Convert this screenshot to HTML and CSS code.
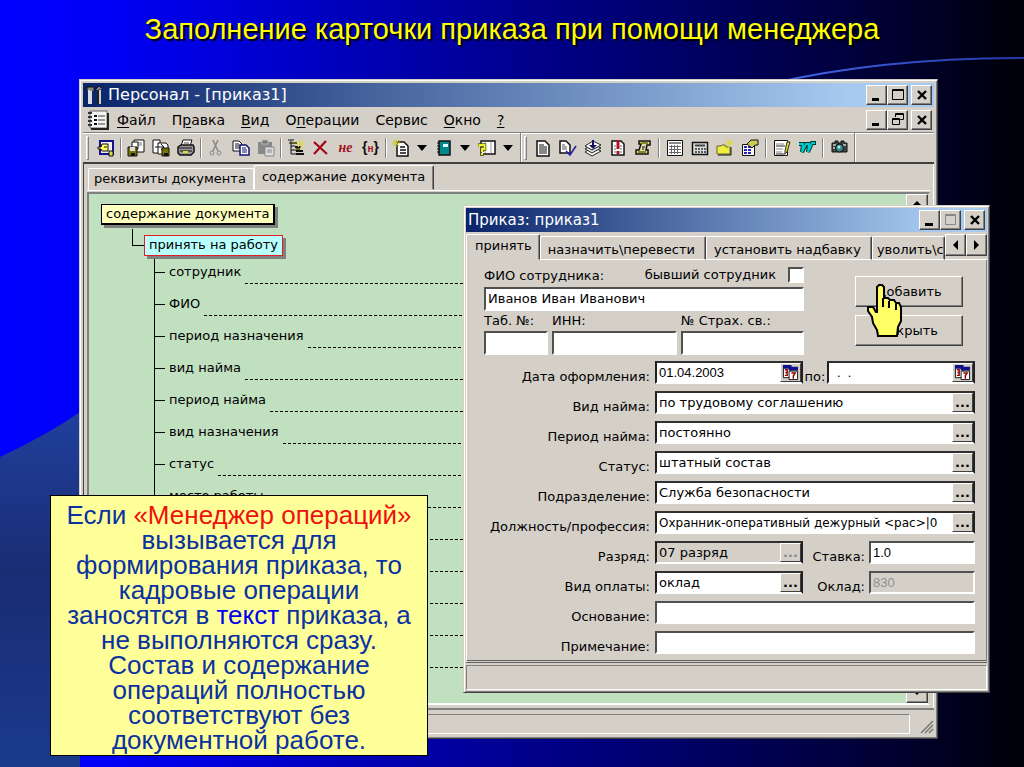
FILE: index.html
```html
<!DOCTYPE html>
<html lang="ru">
<head>
<meta charset="utf-8">
<title>Заполнение карточки приказа</title>
<link rel="stylesheet" href="styles.css">
</head>
<body>
<main class="slide">
  <svg class="backdrop" viewBox="0 0 1024 767" preserveAspectRatio="none" aria-hidden="true">
    <defs>
      <linearGradient id="night" x1="0" x2="1" y1="0" y2="0">
        <stop offset="0" stop-color="#0000ff"/><stop offset=".1" stop-color="#0000f8"/>
        <stop offset=".5" stop-color="#000090"/><stop offset=".86" stop-color="#000034"/><stop offset="1" stop-color="#000008"/>
      </linearGradient>
      <linearGradient id="hill" x1="0" x2="0" y1="0" y2="1">
        <stop offset="0" stop-color="#20409c"/><stop offset=".45" stop-color="#1a2c74"/><stop offset="1" stop-color="#1a3a8c"/>
      </linearGradient>
      <linearGradient id="arc" x1="0" x2="1"><stop offset="0" stop-color="#4468e8"/><stop offset="1" stop-color="#2438a8"/></linearGradient>
    </defs>
    <rect width="1024" height="767" fill="url(#night)"/>
    <path d="M0 457Q45 436 80 412V767H0Z" fill="url(#hill)"/>
    <path d="M770 84Q880 58 1024 58" fill="none" stroke="url(#arc)" stroke-width="2"/>
  </svg>

  <h1 class="headline">Заполнение карточки приказа при помощи менеджера</h1>

  <section class="window main-window">
    <header class="titlebar">
      <svg class="app-icon" viewBox="0 0 18 20"><path d="M1 6V2h7v4M9 5l4-4 4 3" fill="#888" stroke="#111"/><path d="M3 5v14M5 6v13" stroke="#ddd" stroke-width="2"/><path d="M12 5v14" stroke="#222" stroke-width="2"/><path d="M14 5v14" stroke="#ccc" stroke-width="2"/></svg>
      <h2>Персонал - [приказ1]</h2>
      <div class="controls">
        <button aria-label="Свернуть"><svg viewBox="0 0 16 16"><path d="M3 12.500h7" stroke="#000" stroke-width="3"/></svg></button><button aria-label="Развернуть"><svg viewBox="0 0 16 16"><path d="M2.500 2.500h11v10h-11zM2 3.500h12" fill="none" stroke="#000"/></svg></button><button class="close" aria-label="Закрыть"><svg viewBox="0 0 16 16"><path d="M4 4l8 8M12 4l-8 8" stroke="#000" stroke-width="2.400"/></svg></button>
      </div>
    </header>
    <nav class="menubar">
      <svg class="menu-icon" viewBox="0 0 22 20"><path d="M3 1h17v17H3z" fill="#f4f4f4" stroke="#666"/><path d="M4 19h17V3" fill="none" stroke="#222" stroke-width="2"/><path d="M1 3h4M1 7h4M1 11h4M1 15h4" stroke="#333" stroke-width="2"/><path d="M7 6h3M7 10h3M7 14h3" stroke="#111" stroke-width="2"/><path d="M11 6h7M11 10h7M11 14h7" stroke="#999" stroke-width="2"/></svg>
      <ul>
        <li><button><u>Ф</u>айл</button></li><li><button>П<u>р</u>авка</button></li><li><button><u>В</u>ид</button></li><li><button>О<u>п</u>ерации</button></li><li><button>Сервис</button></li><li><button><u>О</u>кно</button></li><li><button><u>?</u></button></li>
      </ul>
      <div class="controls">
        <button aria-label="Свернуть документ"><svg viewBox="0 0 16 16"><path d="M3 12.500h7" stroke="#000" stroke-width="3"/></svg></button><button aria-label="Восстановить документ"><svg viewBox="0 0 16 16"><path d="M5.500 5V1.500h8v6H10M5 2.500h9" fill="none" stroke="#000"/><path d="M2.500 6.500h7v6h-7zM2 7.500h8" fill="none" stroke="#000"/></svg></button><button class="close" aria-label="Закрыть документ"><svg viewBox="0 0 16 16"><path d="M4 4l8 8M12 4l-8 8" stroke="#000" stroke-width="2.400"/></svg></button>
      </div>
    </nav>
    <div class="toolbars">
      <div class="toolbar">
        <i class="grip"></i>
        <button aria-label="Выход"><svg viewBox="0 0 18 18"><path d="M3 2h13v13H3z" fill="#eee" stroke="#118" stroke-width="2"/><path d="M1 8h3l1-3h6v7H5L4 10H1z" fill="#ff6" stroke="#111"/><path d="M7 8h3" stroke="#111"/><path d="M12 12h4v5h-4z" fill="#dd4" stroke="#111"/></svg></button>
        <i class="sep"></i>
        <button aria-label="Сохранить"><svg viewBox="0 0 18 18"><path d="M7 1h10v12H7z" fill="#fff" stroke="#111"/><path d="M9 3h6v4H9z" fill="#bbb"/><path d="M5 3h6v7H5z" fill="#fff" stroke="#111"/><path d="M1 8h9v9H1z" fill="#770" stroke="#111"/><path d="M3 8h5v4H3z" fill="#ddd"/><path d="M4 14h4v3H4z" fill="#111"/></svg></button>
        <button aria-label="Открыть"><svg viewBox="0 0 18 18"><path d="M1 1h7v13H1z" fill="#fff" stroke="#111"/><path d="M6 4h8l2 2v9H6z" fill="#fff" stroke="#111"/><path d="M3 8h8M9 5l3 3-3 3" fill="none" stroke="#111"/><path d="M10 9h7v8h-7z" fill="#770" stroke="#111"/><path d="M12 14h4v3h-4z" fill="#111"/></svg></button>
        <button aria-label="Печать"><svg viewBox="0 0 18 18"><path d="M6 1h9l-2 6H4z" fill="#fff" stroke="#111"/><path d="M7 4h5" stroke="#444"/><path d="M1 8l3-2h12l1 2v5l-3 3H3l-2-2z" fill="#999" stroke="#111" stroke-width="1.500"/><path d="M2 9h13M3 12h12" stroke="#111"/><path d="M6 13h5" stroke="#dd3" stroke-width="2"/></svg></button>
        <i class="sep"></i>
        <button aria-label="Вырезать" disabled><svg viewBox="0 0 18 18" fill="none" stroke="#888"><path d="M6 1l5 11M11 1L6 12" stroke-width="1.500"/><circle cx="5" cy="14" r="2"/><circle cx="12" cy="14" r="2"/></svg></button>
        <button aria-label="Копировать"><svg viewBox="0 0 18 18" fill="#fff"><path d="M1 2h6l3 3v7H1z" stroke="#111"/><path d="M3 5h4M3 7h5M3 9h5" stroke="#111"/><path d="M8 6h6l3 3v7H8z" stroke="#117" stroke-width="1.500"/><path d="M10 9h4M10 11h5M10 13h5" stroke="#117"/></svg></button>
        <button aria-label="Вставить" disabled><svg viewBox="0 0 18 18"><path d="M1 3h14v12H1z" fill="#888"/><path d="M5 1h6v4H5z" fill="#777" stroke="#bbb"/><path d="M8 8h9v9H8z" fill="#ddd" stroke="#888"/><path d="M10 11h5M10 13h5" stroke="#888"/></svg></button>
        <i class="sep"></i>
        <button aria-label="Структура"><svg viewBox="0 0 18 18" fill="none" stroke="#111"><path d="M1 1h6M2 4h6M4 2v13M4 7h4M4 11h5M4 15h5"/><path d="M8 8h6M9 12h7M9 15h8" stroke-width="2"/><path d="M5 4h5M9 10h4" stroke="#661" stroke-width="2"/><path d="M14 1v9M10 5h8M11 2l6 6M17 2l-6 6" stroke="#dd4"/></svg></button>
        <button aria-label="Удалить"><svg viewBox="0 0 18 18"><path d="M2 3l13 12M14 2L2 15" stroke="#a00818" stroke-width="2.200"/></svg></button>
        <button class="glyph"><em>не</em></button>
        <button class="glyph"><b>{<span>н</span>}</b></button>
        <i class="sep"></i>
        <button aria-label="Новый документ"><svg viewBox="0 0 18 18"><path d="M5 3h7l4 4v10H5z" fill="#fff" stroke="#111" stroke-width="1.500"/><path d="M8 8h5M8 11h6M8 14h6" stroke="#111" stroke-width="1.500"/><path d="M4 0v8M0 4h8M1 1l6 6M7 1L1 7" stroke="#cc2"/></svg></button>
        <button class="drop" aria-label="Список новых документов"><svg viewBox="0 0 10 6"><path d="M0 0h10L5 6z"/></svg></button>
        <button aria-label="Справочник"><svg viewBox="0 0 18 18"><path d="M4 2h11v14H4z" fill="#088" stroke="#111" stroke-width="1.500"/><path d="M8 5h5v3H8z" fill="#dff"/><path d="M2 4h3M2 7h3M2 10h3M2 13h3" stroke="#111"/></svg></button>
        <button class="drop" aria-label="Список справочников"><svg viewBox="0 0 10 6"><path d="M0 0h10L5 6z"/></svg></button>
        <button aria-label="Запрос"><svg viewBox="0 0 18 18"><path d="M3 2h14v13H3z" fill="#fff" stroke="#111" stroke-width="1.500"/><path d="M7 3v11M13 3v11" stroke="#999"/><path d="M1.500 8V6h5v4H4v3M4 14v3" fill="none" stroke="#551" stroke-width="3.500"/><path d="M1.500 8V6h5v4H4v3M4 14v2" fill="none" stroke="#ee3" stroke-width="2"/></svg></button>
        <button class="drop" aria-label="Список запросов"><svg viewBox="0 0 10 6"><path d="M0 0h10L5 6z"/></svg></button>
      </div>
      <div class="toolbar bar-docs">
        <i class="grip"></i>
        <button aria-label="Текст"><svg viewBox="0 0 18 18"><path d="M3 2h8l4 4v11H3z" fill="#fff" stroke="#111" stroke-width="1.500"/><path d="M5 6h5M5 8h8M5 10h8M5 12h8M5 14h8" stroke="#111"/></svg></button>
        <button aria-label="Проверить"><svg viewBox="0 0 18 18"><path d="M1 2h6l4 4v8H1z" fill="#fff" stroke="#111" stroke-width="1.500"/><path d="M3 6h3M3 8h5M3 10h5" stroke="#555"/><path d="M7 12l4 4 6-9" fill="none" stroke="#22a" stroke-width="1.600"/></svg></button>
        <button aria-label="Провести"><svg viewBox="0 0 18 18" stroke="#222"><path d="M1 13l7 4 9-5-8-4z" fill="#fff"/><path d="M1 10l7 4 9-5-8-4z" fill="#ddd"/><path d="M1 7l7 4 9-5-8-4z" fill="#fff"/><path d="M8 1v5H5l4 4 4-4h-3V1z" fill="#116" stroke="none"/></svg></button>
        <button aria-label="Важное"><svg viewBox="0 0 18 18"><path d="M3 2h9l3 3v11H3z" fill="#fff" stroke="#111" stroke-width="1.500"/><path d="M5 7h2M5 10h2M5 13h2M11 7h2M11 10h2M11 13h2" stroke="#666"/><path d="M9 1v9M9 12v3" stroke="#b01020" stroke-width="3"/></svg></button>
        <button aria-label="Свиток"><svg viewBox="0 0 18 18"><path d="M5 2h11v4h-3l-1 5h2v4H2v-4h3l2-6H5z" fill="#dda" stroke="#111" stroke-width="1.500"/><path d="M7 4h7M4 13h8" stroke="#882" stroke-width="2"/><path d="M8 8h3M8 10h2" stroke="#111"/></svg></button>
        <i class="sep"></i>
        <button aria-label="Таблица"><svg viewBox="0 0 18 18"><path d="M1.500 1.500h15v15h-15z" fill="#fff" stroke="#111"/><path d="M3 4h12" stroke="#888" stroke-width="2"/><path d="M3 7.500h12M3 10.500h12M3 13.500h12M5.500 6v9M8.500 6v9M11.500 6v9" stroke="#666"/></svg></button>
        <button aria-label="Калькулятор"><svg viewBox="0 0 18 18"><path d="M1.500 3.500h15v12h-15z" fill="#ddd" stroke="#111" stroke-width="1.500"/><path d="M4 6.500h10" stroke="#444" stroke-width="2"/><path d="M4 10h11M4 13h11" stroke="#333" stroke-width="1.500" stroke-dasharray="2 1"/></svg></button>
        <button aria-label="Новая папка"><svg viewBox="0 0 18 18"><path d="M1 7h4l1-1h3l1 2h4v7H1z" fill="#ee4" stroke="#662"/><path d="M2 16h13V8" fill="none" stroke="#111"/><path d="M13 0v9M9 4h9M10 1l6 6M16 1l-6 6" stroke="#dd3"/></svg></button>
        <button aria-label="Свойства"><svg viewBox="0 0 18 18"><path d="M1.500 5.500h12v11h-12z" fill="#fff" stroke="#111"/><path d="M3 8h8M3 11h8M3 14h8" stroke="#22b" stroke-width="2" stroke-dasharray="3 1"/><path d="M6 5l4-4h7v5h-3l-3 3z" fill="#cc5" stroke="#111"/></svg></button>
        <i class="sep"></i>
        <button aria-label="Правка записи"><svg viewBox="0 0 18 18"><path d="M1.500 1.500h13v15h-13z" fill="#fff" stroke="#111"/><path d="M3 5h8M3 10h7M3 13h6" stroke="#888"/><path d="M3 7h9M3 15h9" stroke="#222"/><path d="M12 12l2-9h3l-3 10-2 2z" fill="#dd3" stroke="#331"/></svg></button>
        <button aria-label="Экспорт"><svg viewBox="0 0 18 18"><path d="M1 5h4l-1 8 4-8h3l-1 8 4-9h4" fill="none" stroke="#033" stroke-width="4"/><path d="M1 5h4l-1 8 4-8h3l-1 8 4-9h3" fill="none" stroke="#0cc" stroke-width="2"/></svg></button>
        <i class="sep"></i>
        <button aria-label="Снимок"><svg viewBox="0 0 18 18"><path d="M2 4h3V2h3v2h3V2h3v2h3v9H2z" fill="#444" stroke="#111"/><path d="M3 6h3M13 6h3M3 9h2" stroke="#ccc" stroke-width="1.500"/><circle cx="9.500" cy="9" r="4" fill="#388" stroke="#111"/><circle cx="9" cy="8" r="1.500" fill="#aee"/></svg></button>
      </div>
    </div>
    <div class="document">
      <div class="tabs doc-tabs" role="tablist">
        <button role="tab" aria-selected="false">реквизиты документа</button><button role="tab" aria-selected="true">содержание документа</button>
      </div>
      <div class="canvas">
        <div class="tree">
          <div class="node root">содержание документа</div>
          <div class="branch"><div class="node action">принять на работу</div></div>
          <ul class="leaves">
            <li><span>сотрудник</span></li><li><span>ФИО</span></li><li><span>период назначения</span></li><li><span>вид найма</span></li><li><span>период найма</span></li><li><span>вид назначения</span></li><li><span>статус</span></li><li><span>место работы</span></li><li></li><li></li><li></li><li></li><li></li>
          </ul>
        </div>
        <div class="scrollbar">
          <button aria-label="Вверх"><svg viewBox="0 0 10 6"><path d="M0 5h10L5 0z"/></svg></button>
          <button aria-label="Вниз"><svg viewBox="0 0 10 6"><path d="M0 0h10L5 5z"/></svg></button>
        </div>
      </div>
    </div>
    <footer class="statusbar"><div></div><svg viewBox="0 0 14 14"><path d="M1 13L13 1M5 13l8-8M9 13l4-4" stroke="#777" stroke-width="1.500"/></svg></footer>
  </section>

  <section class="window dialog">
    <header class="titlebar">
      <h2>Приказ: приказ1</h2>
      <div class="controls">
        <button aria-label="Свернуть окно"><svg viewBox="0 0 16 16"><path d="M3 12.500h8" stroke="#000" stroke-width="3"/></svg></button><button aria-label="Развернуть окно" disabled><svg viewBox="0 0 16 16"><path d="M2.500 2.500h10v10h-10zM2 3.500h11" fill="none" stroke="#888"/></svg></button><button class="close" aria-label="Закрыть окно"><svg viewBox="0 0 16 16"><path d="M4 4l8 8M12 4l-8 8" stroke="#000" stroke-width="2.400"/></svg></button>
      </div>
    </header>
    <div class="tab-row">
      <div class="tabs dialog-tabs" role="tablist">
        <button role="tab" aria-selected="true">принять</button><button role="tab" aria-selected="false">назначить\перевести</button><button role="tab" aria-selected="false">установить надбавку</button><button role="tab" aria-selected="false">уволить\с</button>
      </div>
      <div class="tab-scroll">
        <button aria-label="Назад"><svg viewBox="0 0 6 10"><path d="M5 0v10L0 5z"/></svg></button><button aria-label="Вперёд"><svg viewBox="0 0 6 10"><path d="M0 0v10l5-5z"/></svg></button>
      </div>
    </div>
    <form class="panel">
      <div class="person">
        <div class="person-data">
          <div class="caption"><label for="fio">ФИО сотрудника:</label><label class="former">бывший сотрудник <input type="checkbox"></label></div>
          <div class="field"><input id="fio" value="Иванов Иван Иванович"></div>
          <div class="codes">
            <div><label for="tab">Таб. №:</label><div class="field"><input id="tab"></div></div>
            <div><label for="inn">ИНН:</label><div class="field"><input id="inn"></div></div>
            <div><label for="ins">№ Страх. св.:</label><div class="field"><input id="ins"></div></div>
          </div>
        </div>
        <div class="actions">
          <button type="button">Добавить</button>
          <button type="button">Закрыть</button>
          <svg class="hand" viewBox="0 0 36 55" aria-hidden="true"><path d="M10 3l2-2h3l2 2v11h4l2 2h4l2 3h3l2 4v14l-3 6-1 9H11l-1-6-4-7-1-6-4-6v-4h5l3 5h1z" fill="#ffff66" stroke="#000" stroke-width="2"/><path d="M16 14v9M22 17v7M29 20v6" stroke="#000" stroke-width="2"/></svg>
        </div>
      </div>
      <div class="rows">
        <label for="date">Дата оформления:</label>
        <div class="split">
          <div class="field boxed half"><input id="date" class="num" value="01.04.2003"><button type="button" aria-label="Календарь"><svg viewBox="0 0 18 18"><path d="M1.500 2.500h8v12h-8z" fill="#fff" stroke="#111"/><path d="M1 1h9v4H1zM7 3h10v4H7z" fill="#118"/><path d="M7.500 7.500h9v9h-9z" fill="#fff" stroke="#111"/><path d="M3 6h2.500v3H3.500h2v3H3M10 9.500h4l-2 3v3" fill="none" stroke="#900" stroke-width="1.500"/></svg></button></div>
          <label class="to" for="date2">по:</label>
          <div class="field boxed"><input id="date2" class="num blank" value=".  ."><button type="button" aria-label="Календарь окончания"><svg viewBox="0 0 18 18"><path d="M1.500 2.500h8v12h-8z" fill="#fff" stroke="#111"/><path d="M1 1h9v4H1zM7 3h10v4H7z" fill="#118"/><path d="M7.500 7.500h9v9h-9z" fill="#fff" stroke="#111"/><path d="M3 6h2.500v3H3.500h2v3H3M10 9.500h4l-2 3v3" fill="none" stroke="#900" stroke-width="1.500"/></svg></button></div>
        </div>
        <label for="hire">Вид найма:</label>
        <div class="field boxed"><input id="hire" value="по трудовому соглашению"><button type="button">...</button></div>
        <label for="period">Период найма:</label>
        <div class="field boxed"><input id="period" value="постоянно"><button type="button">...</button></div>
        <label for="status">Статус:</label>
        <div class="field boxed"><input id="status" value="штатный состав"><button type="button">...</button></div>
        <label for="unit">Подразделение:</label>
        <div class="field boxed"><input id="unit" value="Служба безопасности"><button type="button">...</button></div>
        <label for="post">Должность/профессия:</label>
        <div class="field boxed"><input id="post" class="long" value="Охранник-оперативный дежурный &lt;рас&gt;|0"><button type="button">...</button></div>
        <label for="grade">Разряд:</label>
        <div class="split">
          <div class="field boxed half gray"><input id="grade" value="07 разряд"><button type="button" disabled>...</button></div>
          <label class="side" for="rate">Ставка:</label>
          <div class="field"><input id="rate" class="num" value="1.0"></div>
        </div>
        <label for="pay">Вид оплаты:</label>
        <div class="split">
          <div class="field boxed half"><input id="pay" value="оклад"><button type="button">...</button></div>
          <label class="side" for="salary">Оклад:</label>
          <div class="field gray"><input id="salary" class="num" value="830" disabled></div>
        </div>
        <label for="basis">Основание:</label>
        <div class="field"><input id="basis"></div>
        <label for="note">Примечание:</label>
        <div class="field"><input id="note"></div>
      </div>
    </form>
    <footer class="dialog-status"></footer>
  </section>

  <aside class="callout">Если <span class="red">«Менеджер операций»</span> вызывается для формирования приказа, то кадровые операции заносятся в <span class="blue">текст</span> приказа, а не выполняются сразу. Состав и содержание операций полностью соответствуют без документной работе.</aside>
</main>
</body>
</html>
```

FILE: styles.css
```css
* { box-sizing: border-box; }

body {
  margin: 0;
  background: #00003c;
  color: #000;
  font: 13px/16px "DejaVu Sans", sans-serif;
}

button, input { font: inherit; color: inherit; margin: 0; padding: 0; border-radius: 0; }
button { border: 0; background: none; }
h1, h2, ul { margin: 0; padding: 0; font-weight: normal; list-style: none; }
svg { display: block; }

.slide { position: relative; min-height: 100vh; overflow: hidden; }
.backdrop { position: absolute; inset: 0; width: 100%; height: 100%; }

.headline {
  position: relative;
  padding-top: 12px;
  text-align: center;
  color: #ff0;
  font: 29px/34px "Liberation Sans", Arial, sans-serif;
  text-shadow: 2px 2px 1px #000;
}

/* windows */
.window {
  position: absolute;
  background: #d4d0c8;
  border: 1px solid;
  border-color: #d4d0c8 #404040 #404040 #d4d0c8;
  box-shadow: inset 1px 1px #fff, inset -1px -1px #808080;
}
.main-window { top: 79px; left: 79px; right: 86px; padding: 3px; }
.dialog { top: 205px; left: 463px; right: 34px; padding: 2px; }

.titlebar {
  display: flex;
  align-items: center;
  height: 24px;
  padding: 0 2px 0 3px;
  background: linear-gradient(90deg, #0a246a, #a6caf0 90%);
  color: #fff;
}
.titlebar h2 { flex: 1; font-size: 16px; line-height: 20px; }
.app-icon { width: 18px; height: 20px; margin-right: 4px; }
.dialog .titlebar { padding-left: 2px; }
.dialog h2 { font-size: 15px; }

.controls { display: flex; }
.controls button, .scrollbar button, .tab-scroll button {
  display: grid;
  place-items: center;
  width: 21px;
  height: 20px;
  background: #d4d0c8;
  border: 1px solid;
  border-color: #fff #404040 #404040 #fff;
  box-shadow: inset -1px -1px #808080;
}
.controls svg { width: 16px; height: 16px; }
.controls .close { margin-left: 3px; }

.menubar { display: flex; align-items: center; height: 25px; padding: 0 2px 0 4px; }
.menu-icon { width: 22px; height: 20px; }
.menubar ul { display: flex; flex: 1; gap: 16px; padding-left: 8px; font-size: 14px; }
.menubar u { text-underline-offset: 2px; }

/* toolbars */
.toolbars {
  display: flex;
  height: 32px;
  border-top: 1px solid #808080;
  border-bottom: 2px solid #404040;
  box-shadow: inset 0 1px #fff;
}
.toolbar { display: flex; align-items: center; padding: 1px 3px 0; border-right: 1px solid #808080; box-shadow: 1px 0 #fff; }
.toolbar button { display: grid; place-items: center; width: 25px; height: 24px; }
.toolbar button svg { width: 18px; height: 18px; }
.toolbar .drop { width: 18px; }
.toolbar .drop svg { width: 10px; height: 6px; }
.grip { width: 3px; height: 24px; margin-right: 4px; border: 1px solid; border-color: #fff #808080 #808080 #fff; }
.sep { width: 2px; height: 20px; margin: 0 1px 0 2px; border-left: 1px solid #808080; border-right: 1px solid #fff; }
.bar-docs .sep { margin: 0 2px 0 3px; }
.bar-docs .grip { margin-right: 3px; }
.glyph { font-family: "Liberation Serif", serif; font-size: 15px; color: #a01020; }
.glyph em { font-weight: bold; font-size: 14px; }
.glyph b { font-family: "Liberation Sans", sans-serif; color: #111; font-size: 14px; }
.glyph b span { color: #a01020; font-size: 10px; }

/* document area */
.document { padding: 1px 3px 3px; border-left: 1px solid #404040; border-right: 1px solid #fff; }
.tabs { display: flex; align-items: flex-end; }
.tabs button {
  white-space: nowrap;
  border: 1px solid;
  border-color: #fff #404040 transparent #fff;
  border-radius: 2px 2px 0 0;
  box-shadow: inset -1px 0 #808080;
}
.doc-tabs { height: 26px; padding-left: 1px; border-bottom: 1px solid #fff; }
.doc-tabs button { height: 22px; padding: 0 7px 0 5px; }
.doc-tabs [aria-selected="false"] { border-right-color: #fff; box-shadow: none; }
.doc-tabs [aria-selected="true"] { height: 25px; padding: 0 8px 2px 7px; }

.canvas {
  display: flex;
  margin-top: 1px;
  border: 2px solid;
  border-color: #808080 #d4d0c8 #fff #808080;
  background: #c0e0c0;
}
.tree { flex: 1; padding: 10px 0 31px 12px; }
.node { width: max-content; height: 21px; padding: 1px 4px; border: 1px solid #000; box-shadow: 3px 3px #808080; }
.root { background: #ffffc0; border-width: 1px 2px 2px 1px; }
.branch { display: flex; margin: 4px 0 0 31px; padding-top: 6px; }
.branch::before { content: ""; width: 11px; height: 16px; margin-top: -6px; border: solid #000; border-width: 0 0 1px 1px; }
.action { background: #b8ffff; border-color: #e02020; }
.leaves { margin-left: 53px; border-left: 1px solid #000; }
.leaves li { display: flex; height: 32px; }
.leaves li::before { content: ""; width: 10px; height: 1px; margin-top: 16px; background: #000; }
.leaves span { padding: 8px 4px 0; }
.leaves li::after {
  content: "";
  flex: 1;
  height: 1px;
  margin-top: 27px;
  background: repeating-linear-gradient(90deg, #000 0 3px, transparent 3px 5px);
}
.scrollbar { display: flex; flex-direction: column; justify-content: space-between; width: 22px; background: #e8e6e2; }
.scrollbar button { width: 22px; }
.scrollbar svg { width: 10px; height: 6px; }

.statusbar {
  display: flex;
  align-items: flex-end;
  gap: 10px;
  padding: 4px 0 1px;
  border-top: 2px solid #808080;
}
.statusbar div { flex: 1; height: 20px; border: 1px solid; border-color: #808080 #fff #fff #808080; }
.statusbar svg { width: 14px; height: 14px; }

/* order dialog */
.tab-row { display: flex; height: 28px; padding-top: 2px; box-shadow: inset 0 -1px #fff; }
.dialog-tabs { flex: 1; min-width: 0; overflow: hidden; }
.dialog-tabs button { flex: none; height: 24px; padding: 3px 10px 0 7px; }
.dialog-tabs [aria-selected="true"] { height: 26px; padding: 0 7px 2px 8px; background: #d4d0c8; }
.dialog-tabs [aria-selected="false"]:last-child { padding: 3px 0 0 4px; }
.tab-scroll { display: flex; }
.tab-scroll button { height: 22px; }
.tab-scroll svg { width: 6px; height: 10px; }

.panel {
  padding: 7px 11px 6px 17px;
  border-left: 1px solid #fff;
  border-right: 1px solid #808080;
  border-bottom: 3px double #606060;
}
.person { display: flex; justify-content: space-between; }
.person-data { width: 320px; }
.caption { display: flex; justify-content: space-between; height: 20px; }
.caption > label { padding-top: 1px; }
.caption .former { display: flex; align-items: center; gap: 12px; height: 16px; padding: 0; }
.former input {
  appearance: none;
  width: 16px;
  height: 16px;
  background: #fff;
  border: 2px solid;
  border-color: #505050 #fff #fff #505050;
}
.codes { display: grid; grid-template-columns: 64px 125px minmax(0, 1fr); column-gap: 4px; padding-top: 2px; }
.codes label { display: block; height: 18px; white-space: nowrap; }

.field { display: flex; height: 23px; background: #fff; border: 2px solid; border-color: #505050 #fff #fff #505050; flex: 1; min-width: 0; }
.person-data .field { height: 24px; }
.field input { flex: 1; width: 100%; min-width: 0; padding-left: 2px; border: 0; background: none; outline: 0; }
.field .num { font-family: "Liberation Sans", Arial, sans-serif; }
.field .long { font-size: 12px; }
.field .blank { padding-left: 8px; }
.boxed { border-color: #303030 #202020 #fff #202020; }
.field button {
  display: grid;
  flex: none;
  place-items: center;
  width: 21px;
  background: #d4d0c8;
  border: 1px solid;
  border-color: #fff #404040 #404040 #fff;
  font-weight: bold;
  line-height: 14px;
}
.field button svg { width: 17px; height: 17px; }
.field button:disabled { color: #888; }
.half { flex: none; width: 148px; }
.gray { background: #d4d0c8; }
.gray input:disabled { color: #909090; }

.actions { position: relative; display: flex; flex-direction: column; gap: 8px; margin: 9px 12px 0 0; }
.actions button {
  width: 108px;
  height: 31px;
  border: 1px solid;
  border-color: #fff #404040 #404040 #fff;
  box-shadow: inset -1px -1px #808080;
}
.hand { position: absolute; left: 12px; top: 8px; width: 36px; height: 55px; }

.rows { display: grid; grid-template-columns: 166px minmax(0, 1fr); column-gap: 5px; row-gap: 7px; padding-top: 6px; }
.rows label { padding-top: 8px; height: 23px; text-align: right; white-space: nowrap; }
.split { display: flex; min-width: 0; }
.split .to { flex: none; width: 24px; text-align: center; }
.split .side { flex: none; width: 66px; padding-right: 4px; }
.dialog-status { height: 25px; margin-top: 2px; border: 1px solid; border-color: #808080 #fff #fff #808080; }

.callout {
  position: absolute;
  left: 50px;
  bottom: 11px;
  width: 378px;
  padding: 7px 12px 2px;
  background: #ffff99;
  border: 1px solid #000;
  color: #0a32a0;
  font: 26px/25px "Liberation Sans", Arial, sans-serif;
  text-align: center;
}
.red { color: #f01010; }
.blue { color: #0000f0; }
```
